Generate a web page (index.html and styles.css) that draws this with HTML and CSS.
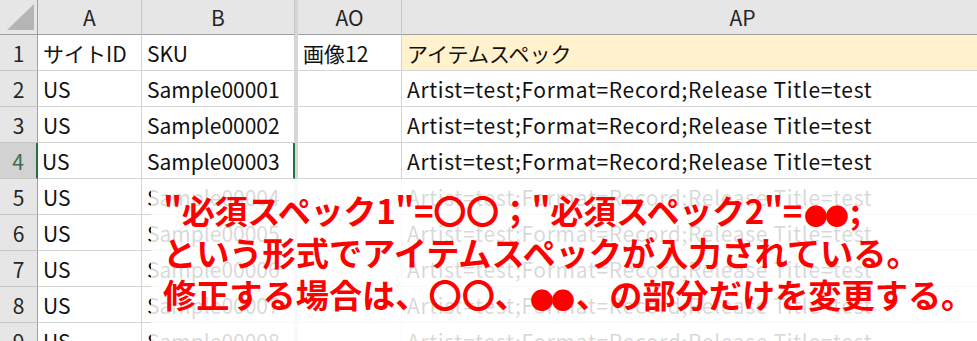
FILE: index.html
```html
<!DOCTYPE html>
<html lang="ja">
<head>
<meta charset="utf-8">
<title>Sheet</title>
<link rel="stylesheet" href="styles.css">
</head>
<body>
<div class="wrap">
  <div class="sheet">
    <div class="hd corner"><span class="tri"></span></div>
    <div class="hd col">A</div>
    <div class="hd col">B</div>
    <div class="frz"></div>
    <div class="hd col">AO</div>
    <div class="hd col">AP</div>

    <div class="rh">1</div>
    <div class="c">サイトID</div>
    <div class="c">SKU</div>
    <div class="frz"></div>
    <div class="c">画像12</div>
    <div class="c yel">アイテムスペック</div>

    <div class="rh">2</div>
    <div class="c">US</div>
    <div class="c">Sample00001</div>
    <div class="frz"></div>
    <div class="c"></div>
    <div class="c wide">Artist=test;Format=Record;Release Title=test</div>

    <div class="rh">3</div>
    <div class="c">US</div>
    <div class="c">Sample00002</div>
    <div class="frz"></div>
    <div class="c"></div>
    <div class="c wide">Artist=test;Format=Record;Release Title=test</div>

    <div class="rh sel">4</div>
    <div class="c selL">US</div>
    <div class="c selR">Sample00003</div>
    <div class="frz"></div>
    <div class="c"></div>
    <div class="c wide">Artist=test;Format=Record;Release Title=test</div>

    <div class="rh">5</div>
    <div class="c">US</div>
    <div class="c">Sample00004</div>
    <div class="frz"></div>
    <div class="c"></div>
    <div class="c wide">Artist=test;Format=Record;Release Title=test</div>

    <div class="rh">6</div>
    <div class="c">US</div>
    <div class="c">Sample00005</div>
    <div class="frz"></div>
    <div class="c"></div>
    <div class="c wide">Artist=test;Format=Record;Release Title=test</div>

    <div class="rh">7</div>
    <div class="c">US</div>
    <div class="c">Sample00006</div>
    <div class="frz"></div>
    <div class="c"></div>
    <div class="c wide">Artist=test;Format=Record;Release Title=test</div>

    <div class="rh">8</div>
    <div class="c">US</div>
    <div class="c">Sample00007</div>
    <div class="frz"></div>
    <div class="c"></div>
    <div class="c wide">Artist=test;Format=Record;Release Title=test</div>

    <div class="rh">9</div>
    <div class="c">US</div>
    <div class="c">Sample00008</div>
    <div class="frz"></div>
    <div class="c"></div>
    <div class="c wide">Artist=test;Format=Record;Release Title=test</div>
  </div>

  <div class="note">
    <div class="line tight">"必須スペック1"=〇〇；"必須スペック2"=<span class="dot">●●</span>;</div>
    <div class="line">という形式でアイテムスペックが入力されている。</div>
    <div class="line">修正する場合は、〇〇、<span class="dot">●●</span>、の部分だけを変更する。</div>
  </div>
</div>
</body>
</html>
```

FILE: styles.css
```css
html, body {
  margin: 0;
  padding: 0;
  background: #ffffff;
}
body {
  width: 977px;
  height: 341px;
  overflow: hidden;
  font-family: "Noto Sans CJK JP", "Noto Sans", sans-serif;
}
.wrap {
  position: relative;
  width: 977px;
  height: 341px;
  overflow: hidden;
}
.sheet {
  display: grid;
  grid-template-columns: 38px 104px 153px 3px 104px 682px;
  grid-template-rows: 35px repeat(9, 36px);
  width: 1084px;
}
.hd {
  box-sizing: border-box;
  background: #e6e6e6;
  border-bottom: 1px solid #a0a0a0;
  border-right: 1px solid #c6c6c6;
  display: flex;
  align-items: center;
  justify-content: center;
  font-size: 21px;
  color: #262626;
}
.corner {
  position: relative;
  border-right: 1px solid #a0a0a0;
}
.tri {
  position: absolute;
  right: 3px;
  bottom: 4px;
  width: 0;
  height: 0;
  border-left: 27px solid transparent;
  border-bottom: 26px solid #b5b5b5;
}
.frz {
  background: #d6d6d6;
}
.rh {
  box-sizing: border-box;
  background: #e6e6e6;
  border-right: 1px solid #a0a0a0;
  border-bottom: 1px solid #c6c6c6;
  display: flex;
  align-items: center;
  justify-content: center;
  font-size: 21px;
  color: #262626;
}
.rh.sel {
  background: #d2d2d2;
  color: #3b6e4f;
  border-right: 2px solid #217346;
}
.c {
  box-sizing: border-box;
  border-right: 1px solid #d4d4d4;
  border-bottom: 1px solid #d4d4d4;
  display: flex;
  align-items: center;
  padding-left: 5px;
  font-size: 21px;
  color: #111111;
  white-space: nowrap;
  overflow: hidden;
}
.c.wide {
  letter-spacing: 0.68px;
}
.c.yel {
  background: #fff2cc;
}
.c.selL {
  padding-left: 4px;
}
.c.selR {
  border-right: 2px solid #217346;
}
.note {
  position: absolute;
  left: 151px;
  top: 179px;
  right: 0;
  bottom: 0;
  background: rgba(255, 255, 255, 0.84);
  padding: 10px 0 0 12px;
  box-sizing: border-box;
}
.line {
  color: #ff0000;
  font-weight: 700;
  font-size: 33.2px;
  line-height: 42px;
  white-space: nowrap;
}
.line.tight {
  letter-spacing: -0.4px;
}
.dot {
  display: inline-block;
  font-size: 24px;
  line-height: 1;
  vertical-align: middle;
  letter-spacing: -3px;
  padding: 0 4px 0 2px;
}
```
